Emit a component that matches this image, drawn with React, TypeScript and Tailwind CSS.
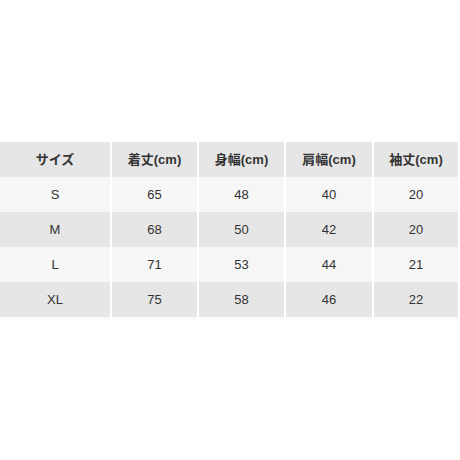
const headers = ["サイズ", "着丈(cm)", "身幅(cm)", "肩幅(cm)", "袖丈(cm)"];

const rows = [
  ["S", "65", "48", "40", "20"],
  ["M", "68", "50", "42", "20"],
  ["L", "71", "53", "44", "21"],
  ["XL", "75", "58", "46", "22"],
];

const cols = "grid grid-cols-[110px_85px_85px_86px_84px] gap-x-[2px]";

export default function App() {
  return (
    <div className="min-h-[460px] w-[460px] bg-white pt-[142px] font-['Liberation_Sans','Noto_Sans_CJK_JP',sans-serif] text-[13px] text-[#333]">
      <div className={`${cols} h-[35px] bg-white`}>
        {headers.map((h) => (
          <div
            key={h}
            className="flex items-center justify-center bg-[#e6e6e6] font-bold"
          >
            {h}
          </div>
        ))}
      </div>
      {rows.map((row, i) => (
        <div key={row[0]} className={`${cols} h-[35px]`}>
          {row.map((cell, j) => (
            <div
              key={j}
              className={`flex items-center justify-center ${
                i % 2 === 0 ? "bg-[#f6f6f6]" : "bg-[#e6e6e6]"
              }`}
            >
              {cell}
            </div>
          ))}
        </div>
      ))}
      <div className={`${cols} h-[3px]`}>
        {headers.map((h) => (
          <div key={h} className="bg-[#f9f9f9]" />
        ))}
      </div>
    </div>
  );
}
